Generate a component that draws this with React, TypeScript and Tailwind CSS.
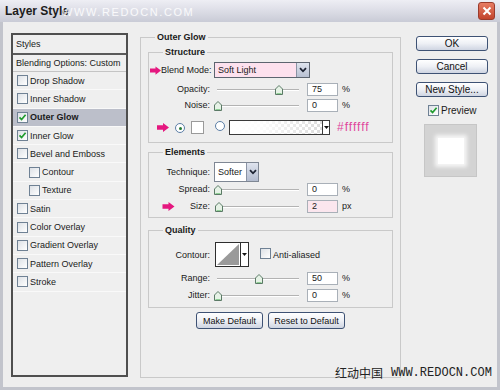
import React from "react";

const FONT = { fontFamily: '"Liberation Sans", Arial, sans-serif' };

function Check({ checked }: { checked?: boolean }) {
  return (
    <span className="inline-flex h-[11px] w-[11px] shrink-0 items-center justify-center border border-[#6f8194] bg-gradient-to-br from-[#dde1e6] to-white">
      {checked && (
        <svg width="9" height="9" viewBox="0 0 9 9">
          <path d="M1.5 4.3 L3.6 6.5 L7.6 1.8" fill="none" stroke="#1f9b2d" strokeWidth="1.7" />
        </svg>
      )}
    </span>
  );
}

function PinkArrow({ w = 12 }: { w?: number }) {
  return (
    <svg width={w} height="9" viewBox="0 0 12 9" className="shrink-0">
      <path d="M0 2.3 H6 V0 L12 4.5 L6 9 V6.7 H0 Z" fill="#e5177f" />
    </svg>
  );
}

function Thumb() {
  return (
    <svg width="8" height="10" viewBox="0 0 8 10">
      <path d="M0.5 4 L4 0.5 L7.5 4 V9.5 H0.5 Z" fill="#e6f2e6" stroke="#5b7a66" strokeWidth="1" />
      <path d="M1.5 8.5 H6.5" stroke="#8fcf95" strokeWidth="1" />
    </svg>
  );
}

function Slider({ pct }: { pct: number }) {
  return (
    <div className="relative ml-[4px] h-[14px] w-[88px] shrink-0">
      <div className="absolute left-[3px] right-[3px] top-[7px] h-[2px] border-t border-b border-t-[#b3b3b3] border-b-white" />
      <div className="absolute top-[3px]" style={{ left: `${pct * 0.81}px` }}>
        <Thumb />
      </div>
    </div>
  );
}

function NumInput({ v, pink }: { v: string; pink?: boolean }) {
  return (
    <div
      className={
        "ml-[5px] flex h-[13px] w-[31px] shrink-0 items-center border border-[#a9b0b8] pl-[4px] text-[9px] " +
        (pink ? "bg-[#fbe6ee]" : "bg-white")
      }
    >
      {v}
    </div>
  );
}

function Row({
  label,
  pct,
  v,
  unit,
  arrow,
  pink,
  cls,
}: {
  label: string;
  pct: number;
  v: string;
  unit: string;
  arrow?: boolean;
  pink?: boolean;
  cls: string;
}) {
  return (
    <div className={"flex h-[14px] items-center whitespace-nowrap " + cls}>
      <div className="flex w-[61px] shrink-0 items-center justify-between">
        {arrow ? (
          <span className="ml-[13px]">
            <PinkArrow w={13} />
          </span>
        ) : (
          <span />
        )}
        <span>{label}</span>
      </div>
      <Slider pct={pct} />
      <NumInput v={v} pink={pink} />
      <span className="ml-[4px]">{unit}</span>
    </div>
  );
}

function Chevron() {
  return (
    <svg width="8" height="6" viewBox="0 0 8 6">
      <path d="M1 1.2 L4 4.3 L7 1.2" fill="none" stroke="#1d2433" strokeWidth="1.8" />
    </svg>
  );
}

function Radio({ on }: { on?: boolean }) {
  return (
    <span className="inline-flex h-[10px] w-[10px] shrink-0 items-center justify-center rounded-full border border-[#5b7ea6] bg-white">
      {on && <span className="h-[3px] w-[3px] rounded-full bg-[#247a35]" />}
    </span>
  );
}

function Btn({ children, cls }: { children: React.ReactNode; cls: string }) {
  return (
    <div
      className={
        "flex items-center justify-center whitespace-nowrap rounded-[3px] border border-[#3e5274] bg-gradient-to-b from-white via-[#eef0f5] to-[#cfd5e2] text-[#111] " +
        cls
      }
    >
      {children}
    </div>
  );
}

const items: { label: string; checked?: boolean; active?: boolean; indent?: boolean }[] = [
  { label: "Drop Shadow" },
  { label: "Inner Shadow" },
  { label: "Outer Glow", checked: true, active: true },
  { label: "Inner Glow", checked: true },
  { label: "Bevel and Emboss" },
  { label: "Contour", indent: true },
  { label: "Texture", indent: true },
  { label: "Satin" },
  { label: "Color Overlay" },
  { label: "Gradient Overlay" },
  { label: "Pattern Overlay" },
  { label: "Stroke" },
];

export default function App() {
  return (
    <div
      className="relative flex h-[390px] w-[500px] flex-col overflow-hidden bg-[#eeeeee] text-[9px] leading-[12px] text-[#1a1a1a]"
      style={FONT}
    >
      {/* title bar */}
      <div className="relative flex h-[22px] shrink-0 items-center bg-gradient-to-b from-[#eeeef4] via-[#dcdde6] to-[#c9cbd6] pl-[5px]">
        <span className="text-[12px] font-bold text-[#1c1c1c]">Layer Style</span>
        <span className="absolute left-[62px] top-[6px] text-[11px] tracking-[1.6px] text-white/85">
          WWW.REDOCN.COM
        </span>
        <div className="absolute right-[5px] top-[2px] flex h-[18px] w-[17px] items-center justify-center rounded-[3px] border border-[#9a3b2c] bg-gradient-to-b from-[#e77c63] to-[#c2432b]">
          <svg width="10" height="10" viewBox="0 0 10 10">
            <path d="M1.5 1.5 L8.5 8.5 M8.5 1.5 L1.5 8.5" stroke="white" strokeWidth="2" />
          </svg>
        </div>
      </div>

      {/* body */}
      <div className="flex flex-1 items-start border-x-[3px] border-b-[3px] border-[#c2c4cc] pl-[8px]">
        {/* left list */}
        <div className="mt-[11px] h-[344px] w-[117px] shrink-0 whitespace-nowrap border-2 border-[#4f4f4f] bg-[#efefef]">
          <div className="flex h-[20px] items-center border-b-2 border-[#5a5a5a] pl-[3px]">Styles</div>
          <div className="flex h-[17px] items-center border-b border-[#c4c4c4] pl-[3px]">Blending Options: Custom</div>
          {items.map((it) => (
            <div
              key={it.label}
              className={
                "flex h-[18.3px] items-center gap-[2px] border-b border-[#f9f9f9] " +
                (it.indent ? "pl-[16px] " : "pl-[4px] ") +
                (it.active ? "bg-[#bcbfca] font-bold" : "")
              }
            >
              <Check checked={it.checked} />
              <span>{it.label}</span>
            </div>
          ))}
        </div>

        {/* main group */}
        <fieldset className="ml-[12px] mt-[9px] h-[347px] w-[261px] shrink-0 whitespace-nowrap border border-[#c9c9c9] px-[7px] pt-[3px]">
          <legend className="ml-[7px] px-[2px] font-bold leading-[12px]">Outer Glow</legend>

          {/* Structure */}
          <fieldset className="h-[97px] border border-[#c9c9c9]">
            <legend className="ml-[14px] px-[2px] font-bold leading-[12px]">Structure</legend>
            <div className="mt-[4px] flex h-[16px] items-center">
              <div className="flex w-[61px] shrink-0 items-center justify-between">
                <span className="ml-[1px]">
                  <PinkArrow w={11} />
                </span>
                <span>Blend Mode:</span>
              </div>
              <div className="ml-[4px] flex h-[16px] w-[96px] items-stretch border border-[#5d6570] bg-[#fde1ee]">
                <span className="flex flex-1 items-center pl-[3px] text-[9px]">Soft Light</span>
                <span className="flex w-[13px] items-center justify-center border-l border-[#8a93a4] bg-gradient-to-b from-[#dfe4ee] to-[#b8c0d2]">
                  <Chevron />
                </span>
              </div>
            </div>
            <Row label="Opacity:" pct={75} v="75" unit="%" cls="mt-[4px]" />
            <Row label="Noise:" pct={0} v="0" unit="%" cls="mt-[2px]" />
            <div className="mt-[7px] flex h-[16px] items-center">
              <span className="ml-[8px]">
                <PinkArrow w={12} />
              </span>
              <span className="ml-[6px]">
                <Radio on />
              </span>
              <span className="ml-[6px] h-[13px] w-[13px] border border-[#9a9a9a] bg-white" />
              <span className="ml-[11px]">
                <Radio />
              </span>
              <div className="ml-[4px] flex h-[15px] w-[101px] border border-[#3a3a3a]">
                <svg width="92" height="13" viewBox="0 0 92 13" className="shrink-0">
                  <defs>
                    <pattern id="chk" width="6" height="6" patternUnits="userSpaceOnUse">
                      <rect width="6" height="6" fill="#ffffff" />
                      <rect width="3" height="3" fill="#dcdcdc" />
                      <rect x="3" y="3" width="3" height="3" fill="#dcdcdc" />
                    </pattern>
                    <linearGradient id="fade" x1="0" x2="1" y1="0" y2="0">
                      <stop offset="0" stopColor="#ffffff" stopOpacity="1" />
                      <stop offset="0.35" stopColor="#ffffff" stopOpacity="0.9" />
                      <stop offset="1" stopColor="#ffffff" stopOpacity="0" />
                    </linearGradient>
                  </defs>
                  <rect width="92" height="13" fill="url(#chk)" />
                  <rect width="92" height="13" fill="url(#fade)" />
                </svg>
                <span className="flex flex-1 items-center justify-center border-l border-[#3a3a3a] bg-white">
                  <svg width="5" height="3" viewBox="0 0 5 3">
                    <path d="M0 0 H5 L2.5 3 Z" fill="#111" />
                  </svg>
                </span>
              </div>
              <span className="ml-[7px] text-[12px] tracking-[1px] text-[#e0469c]">#ffffff</span>
            </div>
          </fieldset>

          {/* Elements */}
          <fieldset className="mt-[3px] h-[72px] border border-[#c9c9c9]">
            <legend className="ml-[14px] px-[2px] font-bold leading-[12px]">Elements</legend>
            <div className="mt-[4px] flex h-[20px] items-center">
              <span className="w-[61px] shrink-0 text-right">Technique:</span>
              <div className="ml-[4px] flex h-[20px] w-[45px] items-stretch border border-[#7f8794] bg-white">
                <span className="flex flex-1 items-center pl-[3px]">Softer</span>
                <span className="flex w-[12px] items-center justify-center border-l border-[#8a93a4] bg-gradient-to-b from-[#dfe4ee] to-[#b3bccf]">
                  <Chevron />
                </span>
              </div>
            </div>
            <Row label="Spread:" pct={0} v="0" unit="%" cls="mt-0" />
            <Row label="Size:" pct={1} v="2" unit="px" arrow pink cls="mt-[3px]" />
          </fieldset>

          {/* Quality */}
          <fieldset className="mt-[6px] h-[84px] border border-[#c9c9c9]">
            <legend className="ml-[14px] px-[2px] font-bold leading-[12px]">Quality</legend>
            <div className="mt-[6px] flex h-[25px] items-center">
              <span className="w-[61px] shrink-0 text-right">Contour:</span>
              <div className="ml-[5px] flex h-[25px] w-[34px] border border-[#2e2e2e] bg-white">
                <svg width="24" height="23" viewBox="0 0 24 23" className="shrink-0">
                  <rect width="24" height="23" fill="#ffffff" />
                  <path d="M1 22 L23 1 V22 Z" fill="#9a9a9a" />
                </svg>
                <span className="flex flex-1 items-center justify-center border-l border-[#2e2e2e]">
                  <svg width="5" height="3" viewBox="0 0 5 3">
                    <path d="M0 0 H5 L2.5 3 Z" fill="#111" />
                  </svg>
                </span>
              </div>
              <span className="ml-[11px]">
                <Check />
              </span>
              <span className="ml-[2px]">Anti-aliased</span>
            </div>
            <Row label="Range:" pct={50} v="50" unit="%" cls="mt-[4px]" />
            <Row label="Jitter:" pct={0} v="0" unit="%" cls="mt-[3px]" />
          </fieldset>

          <div className="mt-[4px] flex justify-center gap-[5px]">
            <Btn cls="h-[17px] w-[67px] text-[9px]">Make Default</Btn>
            <Btn cls="h-[17px] w-[77px] text-[9px]">Reset to Default</Btn>
          </div>
        </fieldset>

        {/* right column */}
        <div className="ml-[15px] mt-[14px] flex w-[72px] shrink-0 flex-col text-[10px]">
          <Btn cls="h-[15px]">OK</Btn>
          <Btn cls="mt-[8px] h-[15px]">Cancel</Btn>
          <Btn cls="mt-[8px] h-[15px]">New Style...</Btn>
          <div className="ml-[12px] mt-[8px] flex h-[11px] items-center gap-[2px]">
            <Check checked />
            <span>Preview</span>
          </div>
          <div className="ml-[8px] mt-[8px] flex h-[53px] w-[53px] items-center justify-center border border-[#c6c6c6] bg-[#d3d3d3]">
            <div className="h-[26px] w-[26px] bg-white shadow-[0_0_4px_3px_rgba(255,255,255,0.8)]" />
          </div>
        </div>
      </div>

      {/* bottom watermark */}
      <div
        className="absolute left-[335px] top-[365px] flex items-center text-[12px] leading-[16px] text-[#222]"
        style={{ fontFamily: '"Noto Sans CJK SC", "Liberation Mono", monospace' }}
      >
        <span>红动中国</span>
        <span className="ml-[8px]" style={{ fontFamily: '"Liberation Mono", monospace' }}>
          WWW.REDOCN.COM
        </span>
      </div>
    </div>
  );
}
